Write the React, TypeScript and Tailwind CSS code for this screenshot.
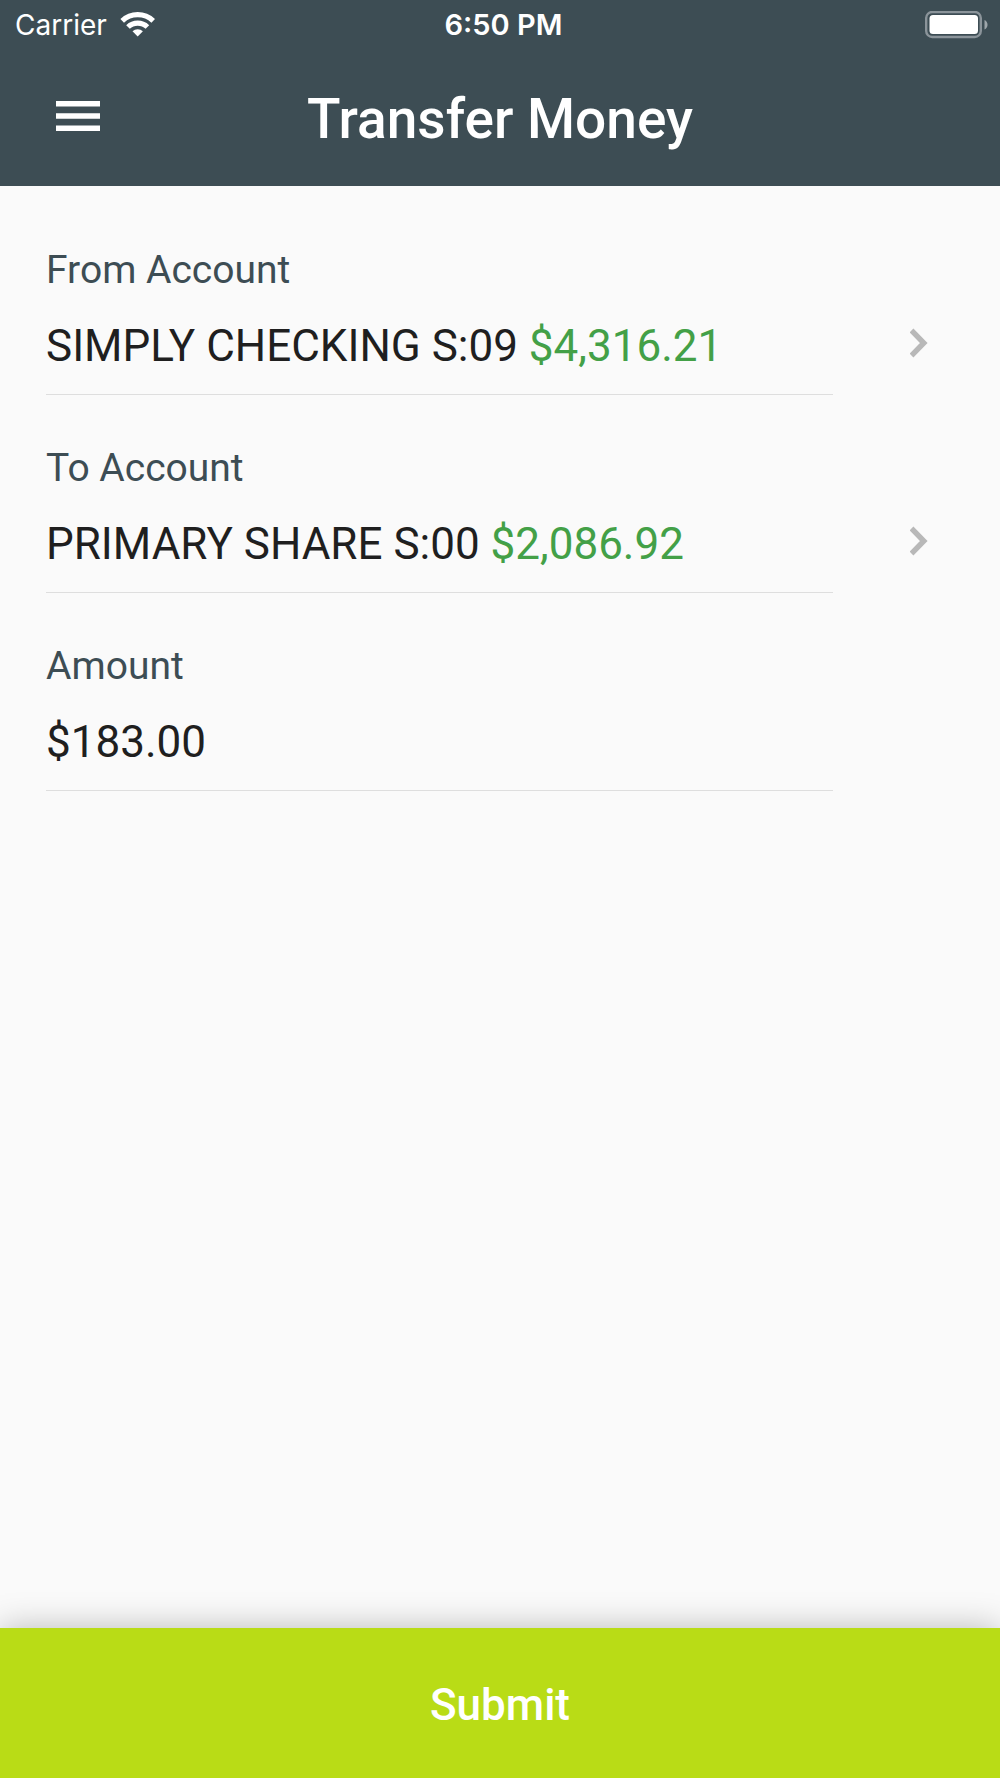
import { useState } from 'react';

function StatusBar() {
  return (
    <div className="grid h-[50px] grid-cols-[1fr_auto_1fr] items-center pl-[15px] pr-2 font-['Inter',sans-serif] text-[28px] text-white">
      <div className="flex items-center gap-3">
        <span>Carrier</span>
        <svg className="h-[26px] w-9" viewBox="0 0 36 26" fill="none" stroke="currentColor" strokeWidth="5.2" aria-hidden="true">
          <path d="M3.200 8.800a22.500 22.500 0 0 1 31 0" />
          <path d="M9 15a14 14 0 0 1 19.400 0" />
          <path d="M18.700 24.500l-5.200-5.200a7.500 7.500 0 0 1 10.400 0z" fill="currentColor" stroke="none" />
        </svg>
      </div>
      <span className="text-[29px] font-semibold">6:50 PM</span>
      <svg className="h-7 w-[68px] justify-self-end" viewBox="0 0 68 28" aria-hidden="true">
        <rect x="2.200" y="1" width="54.600" height="25" rx="6" fill="none" stroke="#8b949a" strokeWidth="2.400" />
        <rect x="5.500" y="4" width="48.500" height="19" rx="3.500" fill="#fff" />
        <path d="M60.500 9c4 1.500 4 8 0 9.500z" fill="#9ea6aa" />
      </svg>
    </div>
  );
}

interface AccountRowProps {
  label: string;
  name: string;
  balance: string;
}

function AccountRow({ label, name, balance }: AccountRowProps) {
  return (
    <button type="button" className="flex w-full items-end text-left">
      <span className="grow border-b border-[#dedede] pb-[18px]">
        <span className="block text-[39px] leading-[52px] text-[#3d4d54]">{label}</span>
        <span className="mt-5 block text-[44px] leading-[60px] text-[#1f1f1f]">
          {name} <span className="text-[#43a047]">{balance}</span>
        </span>
      </span>
      <span className="flex w-[121px] shrink-0 justify-end pr-[26px] pb-[37px]">
        <svg className="h-[30px] w-[18px]" viewBox="0 0 18 30" fill="none" stroke="#b8b8b8" strokeWidth="5.400" aria-hidden="true">
          <path d="M1.500 2.500L13.800 15L1.500 27.500" />
        </svg>
      </span>
    </button>
  );
}

export default function App() {
  const [amount, setAmount] = useState('$183.00');

  return (
    <form
      className="flex min-h-screen flex-col bg-[#fafafa] font-['Roboto',sans-serif]"
      onSubmit={(e) => e.preventDefault()}
    >
      <header className="bg-[#3d4d54]">
        <StatusBar />
        <div className="grid h-[136px] grid-cols-[1fr_auto_1fr] items-center px-14 text-white">
          <button type="button" aria-label="Menu" className="mb-1">
            <svg className="h-[30px] w-11" viewBox="0 0 44 30" fill="currentColor">
              <path d="M0 0h44v5.500H0zM0 12.200h44v5.500H0zM0 24.500h44V30H0z" />
            </svg>
          </button>
          <h1 className="pt-0.5 text-[55px] font-medium">Transfer Money</h1>
        </div>
      </header>

      <main className="flex grow flex-col gap-[47px] px-[46px] pt-[58px]">
        <AccountRow label="From Account" name="SIMPLY CHECKING S:09" balance="$4,316.21" />
        <AccountRow label="To Account" name="PRIMARY SHARE S:00" balance="$2,086.92" />
        <div className="mr-[121px] border-b border-[#dedede] pb-[18px]">
          <label htmlFor="amount" className="block text-[39px] leading-[52px] text-[#3d4d54]">
            Amount
          </label>
          <input
            id="amount"
            type="text"
            inputMode="decimal"
            className="mt-5 block h-[60px] w-full bg-transparent text-[44px] leading-[60px] text-[#1f1f1f] outline-none"
            value={amount}
            onChange={(e) => setAmount(e.target.value)}
          />
        </div>
      </main>

      <button
        type="submit"
        className="h-[150px] bg-[#b9dc16] pt-1 text-[44px] font-medium text-white shadow-[0_0_32px_rgba(0,0,0,0.26)]"
      >
        Submit
      </button>
    </form>
  );
}
